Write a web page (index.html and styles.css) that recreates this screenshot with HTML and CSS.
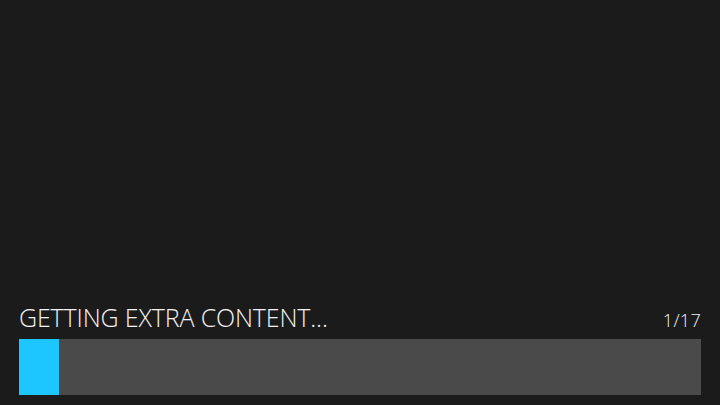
FILE: index.html
```html
<!DOCTYPE html>
<html>
<head>
<meta charset="utf-8">
<link rel="stylesheet" href="styles.css">
</head>
<body>
<div class="loader">
  <div class="labels">
    <span class="title">GETTING EXTRA CONTENT...</span>
    <span class="count">1/17</span>
  </div>
  <div class="track"><div class="fill" style="width: 40px"></div></div>
</div>
</body>
</html>
```
FILE: styles.css
```css
html, body {
  margin: 0;
  height: 100%;
  background: #1b1b1b;
}
body {
  display: flex;
  flex-direction: column;
  justify-content: flex-end;
  font-family: "Open Sans", "Liberation Sans", sans-serif;
  color: #f2f2f2;
}
.loader {
  padding: 0 19px 10px 19px;
}
.labels {
  display: flex;
  justify-content: space-between;
  align-items: baseline;
  margin-bottom: 8px;
}
.title {
  font-size: 25px;
  font-weight: 300;
  letter-spacing: -0.15px;
  line-height: 28px;
}
.count {
  font-size: 18px;
  font-weight: 300;
  letter-spacing: 0.3px;
  line-height: 20px;
}
.track {
  height: 56px;
  background: #4a4a4a;
  display: flex;
}
.fill {
  background: #1ec6ff;
  height: 100%;
}
```
